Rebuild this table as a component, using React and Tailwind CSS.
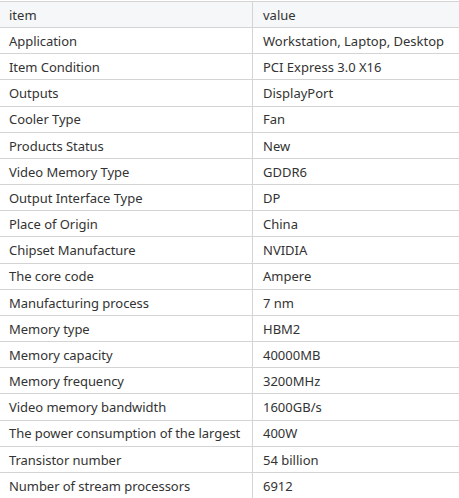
import React from "react";

const rows = [
  ["Application", "Workstation, Laptop, Desktop"],
  ["Item Condition", "PCI Express 3.0 X16"],
  ["Outputs", "DisplayPort"],
  ["Cooler Type", "Fan"],
  ["Products Status", "New"],
  ["Video Memory Type", "GDDR6"],
  ["Output Interface Type", "DP"],
  ["Place of Origin", "China"],
  ["Chipset Manufacture", "NVIDIA"],
  ["The core code", "Ampere"],
  ["Manufacturing process", "7 nm"],
  ["Memory type", "HBM2"],
  ["Memory capacity", "40000MB"],
  ["Memory frequency", "3200MHz"],
  ["Video memory bandwidth", "1600GB/s"],
  ["The power consumption of the largest", "400W"],
  ["Transistor number", "54 billion"],
  ["Number of stream processors", "6912"],
];

export default function App() {
  return (
    <div className="w-[459px] h-[498px] overflow-hidden bg-white pt-px font-['Noto_Sans',sans-serif] text-[13px] text-[#333]">
      <div className="grid grid-cols-[253px_206px] h-[27px] items-center bg-[#f6f7f9] border-t border-b border-[#d4d4d4]">
        <div className="h-full flex items-center pt-[2px] pl-[9px] border-r border-[#d4d4d4]">item</div>
        <div className="h-full flex items-center pt-[2px] pl-[10px]">value</div>
      </div>
      {rows.map(([k, v], i) => (
        <div
          key={i}
          className="grid grid-cols-[253px_206px] h-[26.18px] border-b border-[#d4d4d4]"
        >
          <div className="h-full flex items-center pt-[2px] pl-[9px] border-r border-[#d4d4d4] whitespace-nowrap overflow-hidden tracking-[-0.05px]">
            {k}
          </div>
          <div className="h-full flex items-center pt-[2px] pl-[10px] whitespace-nowrap">{v}</div>
        </div>
      ))}
    </div>
  );
}
